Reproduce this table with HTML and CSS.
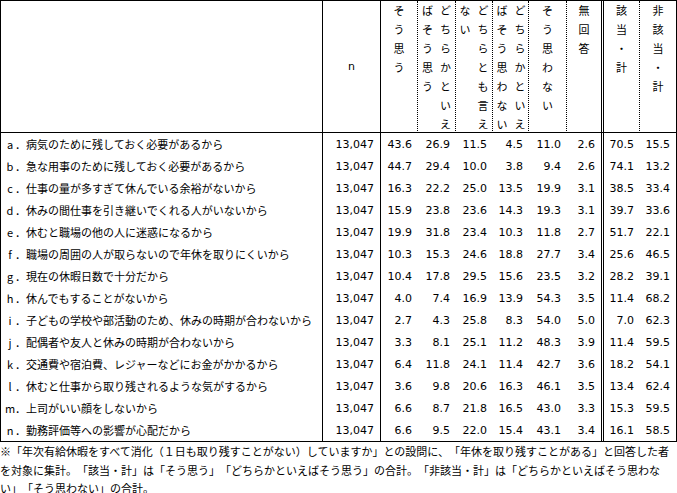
FILE: index.html
```html
<!DOCTYPE html>
<html lang="ja">
<head>
<meta charset="utf-8">
<title>年休を取り残す理由</title>
<link rel="stylesheet" href="styles.css">
</head>
<body>
<table class="survey">
  <thead>
    <tr class="head">
      <th class="sep w-label"></th>
      <th class="sep n w-n">n</th>
      <th class="dot w37"><span class="vt">そう思う</span></th>
      <th class="dot w38"><span class="vt">どちらかといえ<br>ばそう思う</span></th>
      <th class="dot w37"><span class="vt">どちらとも言え<br>ない</span></th>
      <th class="dot w36"><span class="vt">どちらかといえ<br>ばそう思わない</span></th>
      <th class="dot w38"><span class="vt">そう思わない</span></th>
      <th class="dbl w37"><span class="vt">無回答</span></th>
      <th class="dot w36"><span class="vt">該当・計</span></th>
      <th class="w36"><span class="vt">非該当・計</span></th>
    </tr>
  </thead>
  <tbody>
    <tr><td class="label sep"><span class="k">a</span>．病気のために残しておく必要があるから</td><td class="num sep">13,047</td><td class="num">43.6</td><td class="num">26.9</td><td class="num">11.5</td><td class="num">4.5</td><td class="num">11.0</td><td class="num dbl">2.6</td><td class="num">70.5</td><td class="num">15.5</td></tr>
    <tr><td class="label sep"><span class="k">b</span>．急な用事のために残しておく必要があるから</td><td class="num sep">13,047</td><td class="num">44.7</td><td class="num">29.4</td><td class="num">10.0</td><td class="num">3.8</td><td class="num">9.4</td><td class="num dbl">2.6</td><td class="num">74.1</td><td class="num">13.2</td></tr>
    <tr><td class="label sep"><span class="k">c</span>．仕事の量が多すぎて休んでいる余裕がないから</td><td class="num sep">13,047</td><td class="num">16.3</td><td class="num">22.2</td><td class="num">25.0</td><td class="num">13.5</td><td class="num">19.9</td><td class="num dbl">3.1</td><td class="num">38.5</td><td class="num">33.4</td></tr>
    <tr><td class="label sep"><span class="k">d</span>．休みの間仕事を引き継いでくれる人がいないから</td><td class="num sep">13,047</td><td class="num">15.9</td><td class="num">23.8</td><td class="num">23.6</td><td class="num">14.3</td><td class="num">19.3</td><td class="num dbl">3.1</td><td class="num">39.7</td><td class="num">33.6</td></tr>
    <tr><td class="label sep"><span class="k">e</span>．休むと職場の他の人に迷惑になるから</td><td class="num sep">13,047</td><td class="num">19.9</td><td class="num">31.8</td><td class="num">23.4</td><td class="num">10.3</td><td class="num">11.8</td><td class="num dbl">2.7</td><td class="num">51.7</td><td class="num">22.1</td></tr>
    <tr><td class="label sep"><span class="k">f</span>．職場の周囲の人が取らないので年休を取りにくいから</td><td class="num sep">13,047</td><td class="num">10.3</td><td class="num">15.3</td><td class="num">24.6</td><td class="num">18.8</td><td class="num">27.7</td><td class="num dbl">3.4</td><td class="num">25.6</td><td class="num">46.5</td></tr>
    <tr><td class="label sep"><span class="k">g</span>．現在の休暇日数で十分だから</td><td class="num sep">13,047</td><td class="num">10.4</td><td class="num">17.8</td><td class="num">29.5</td><td class="num">15.6</td><td class="num">23.5</td><td class="num dbl">3.2</td><td class="num">28.2</td><td class="num">39.1</td></tr>
    <tr><td class="label sep"><span class="k">h</span>．休んでもすることがないから</td><td class="num sep">13,047</td><td class="num">4.0</td><td class="num">7.4</td><td class="num">16.9</td><td class="num">13.9</td><td class="num">54.3</td><td class="num dbl">3.5</td><td class="num">11.4</td><td class="num">68.2</td></tr>
    <tr><td class="label sep"><span class="k">i</span>．子どもの学校や部活動のため、休みの時期が合わないから</td><td class="num sep">13,047</td><td class="num">2.7</td><td class="num">4.3</td><td class="num">25.8</td><td class="num">8.3</td><td class="num">54.0</td><td class="num dbl">5.0</td><td class="num">7.0</td><td class="num">62.3</td></tr>
    <tr><td class="label sep"><span class="k">j</span>．配偶者や友人と休みの時期が合わないから</td><td class="num sep">13,047</td><td class="num">3.3</td><td class="num">8.1</td><td class="num">25.1</td><td class="num">11.2</td><td class="num">48.3</td><td class="num dbl">3.9</td><td class="num">11.4</td><td class="num">59.5</td></tr>
    <tr><td class="label sep"><span class="k">k</span>．交通費や宿泊費、レジャーなどにお金がかかるから</td><td class="num sep">13,047</td><td class="num">6.4</td><td class="num">11.8</td><td class="num">24.1</td><td class="num">11.4</td><td class="num">42.7</td><td class="num dbl">3.6</td><td class="num">18.2</td><td class="num">54.1</td></tr>
    <tr><td class="label sep"><span class="k">l</span>．休むと仕事から取り残されるような気がするから</td><td class="num sep">13,047</td><td class="num">3.6</td><td class="num">9.8</td><td class="num">20.6</td><td class="num">16.3</td><td class="num">46.1</td><td class="num dbl">3.5</td><td class="num">13.4</td><td class="num">62.4</td></tr>
    <tr><td class="label sep"><span class="k">m</span>．上司がいい顔をしないから</td><td class="num sep">13,047</td><td class="num">6.6</td><td class="num">8.7</td><td class="num">21.8</td><td class="num">16.5</td><td class="num">43.0</td><td class="num dbl">3.3</td><td class="num">15.3</td><td class="num">59.5</td></tr>
    <tr><td class="label sep"><span class="k">n</span>．勤務評価等への影響が心配だから</td><td class="num sep">13,047</td><td class="num">6.6</td><td class="num">9.5</td><td class="num">22.0</td><td class="num">15.4</td><td class="num">43.1</td><td class="num dbl">3.4</td><td class="num">16.1</td><td class="num">58.5</td></tr>
  </tbody>
</table>
<p class="note">※「年次有給休暇をすべて消化（１日も取り残すことがない）していますか」との設問に、「年休を取り残すことがある」と回答した者を対象に集計。「該当・計」は「そう思う」「どちらかといえばそう思う」の合計。「非該当・計」は「どちらかといえばそう思わない」「そう思わない」の合計。</p>
</body>
</html>
```

FILE: styles.css
```css
html, body {
  margin: 0;
  padding: 0;
  background: #fff;
}

body {
  font-family: "Noto Sans CJK JP", sans-serif;
  font-size: 11px;
  color: #000;
  width: 677px;
  text-spacing-trim: space-all;
}

.survey {
  border-collapse: separate;
  border-spacing: 0;
  table-layout: fixed;
  width: 677px;
  border: 1px solid #000;
}

.survey th,
.survey td {
  padding: 0;
  box-sizing: border-box;
}

.w-label { width: 322px; }
.w-n { width: 58px; }
.w36 { width: 36px; }
.w37 { width: 37px; }
.w38 { width: 38px; }

.head th {
  height: 132px;
  vertical-align: top;
  text-align: center;
  font-weight: normal;
  line-height: 1;
  border-bottom: 1px solid #000;
}

.head th.n {
  vertical-align: middle;
  font-family: "DejaVu Sans", sans-serif;
}

.vt {
  display: inline-block;
  vertical-align: top;
  writing-mode: vertical-rl;
  text-orientation: upright;
  white-space: nowrap;
  line-height: 18px;
  letter-spacing: 8px;
  padding-top: 4px;
  height: 122px;
  text-align: left;
}

.sep { border-right: 1px solid #000; }
.dot { border-right: 1px dotted #000; }
.dbl { border-right: 3px double #000; }

.survey tbody td {
  height: 22px;
  vertical-align: middle;
}

.survey td.label {
  padding-left: 4px;
  white-space: nowrap;
  overflow: hidden;
}

.k {
  display: inline-block;
  width: 10px;
  text-align: center;
}

.survey td.num {
  font-family: "DejaVu Sans", sans-serif;
  text-align: right;
  padding-right: 6px;
  white-space: nowrap;
}

.note {
  margin: 0;
  line-height: 18.5px;
}
```
